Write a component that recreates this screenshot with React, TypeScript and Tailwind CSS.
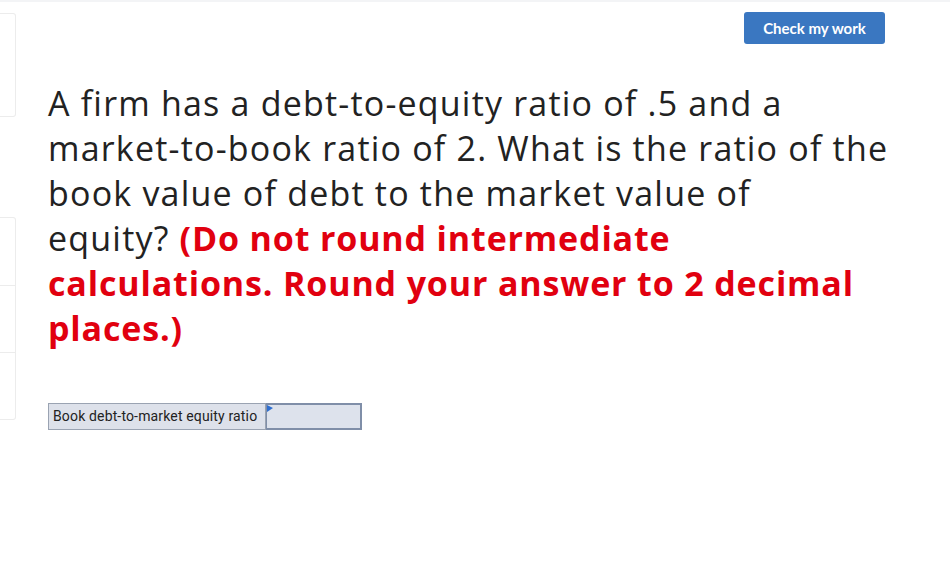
export default function App() {
  return (
    <div className="relative h-[563px] w-[950px] overflow-hidden bg-white">
      <div className="h-[2px] w-full bg-[#f3f4f6]" />

      {/* faint side cards peeking in from the left */}
      <div className="absolute left-0 top-[13px] h-[104px] w-[16px] rounded-r-[3px] border border-l-0 border-[#ececec]" />
      <div className="absolute left-0 top-[217px] flex h-[203px] w-[16px] flex-col rounded-r-[3px] border border-l-0 border-[#ececec]">
        <div className="h-[68px] border-b border-[#ececec]" />
        <div className="h-[67px] border-b border-[#ececec]" />
      </div>

      <div className="flex justify-end pr-[65px] pt-[10px]">
        <button className="h-[32px] w-[141px] rounded-[3px] bg-[#3a77c1] font-['Lato',sans-serif] text-[15px] font-bold text-white">
          Check my work
        </button>
      </div>

      <div className="pl-[48px] pr-[20px] pt-[37px]">
        <p className="whitespace-nowrap font-['Open_Sans',sans-serif] text-[34px] leading-[45px] tracking-[1.2px] text-[#222]">
          A firm has a debt-to-equity ratio of .5 and a<br />
          market-to-book ratio of 2. What is the ratio of the<br />
          book value of debt to the market value of<br />
          equity?{' '}
          <span className="font-bold tracking-[0.85px] text-[#e1000f]">
            (Do not round intermediate<br />
            calculations. Round your answer to 2 decimal<br />
            places.)
          </span>
        </p>

        <div className="mt-[52px] flex h-[27px]">
          <div className="flex w-[218px] items-center border border-[#9aa3b2] bg-[#dde1ea] pl-[4px] font-['Roboto',sans-serif] text-[14px] tracking-[0.15px] text-[#222]">
            Book debt-to-market equity ratio
          </div>
          <div className="relative w-[96px] border-2 border-l border-[#7f8ea8] bg-[#dde2ec]">
            <svg className="absolute left-0 top-0" width="7" height="8" viewBox="0 0 7 8">
              <path d="M0 0 L6 3 L0 7 Z" fill="#2f6fd0" />
            </svg>
          </div>
        </div>
      </div>
    </div>
  );
}
